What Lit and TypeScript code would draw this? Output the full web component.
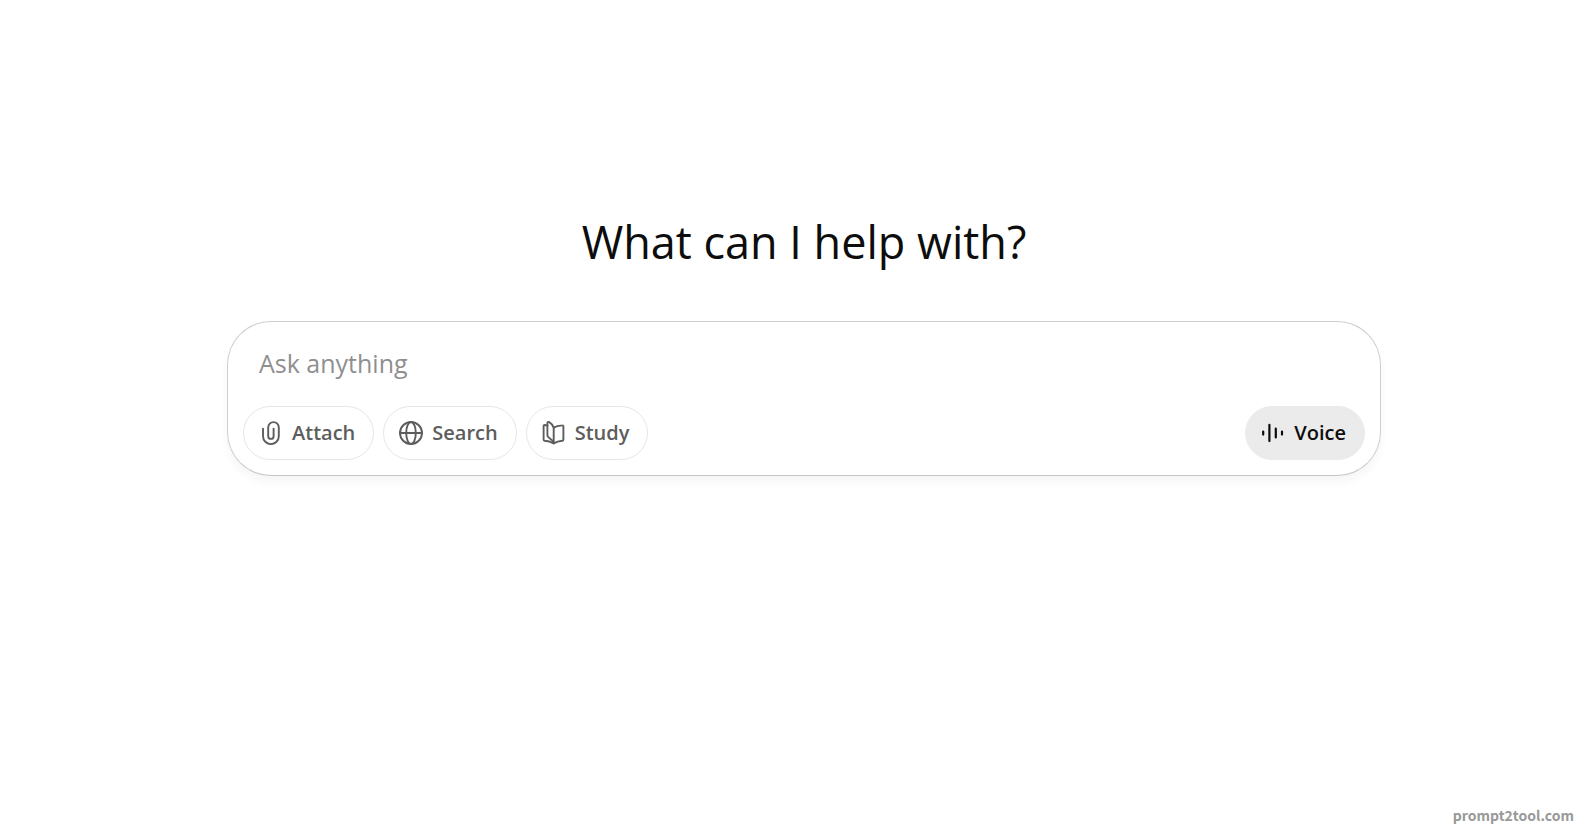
import { LitElement, html, css, svg } from "lit";
import { customElement } from "lit/decorators.js";

const clip = svg`<path d="M4 7.6V15.2a7.9 7.9 0 0 0 15.8 0V6.4a5.3 5.3 0 0 0-10.6 0v8.8a2.7 2.7 0 0 0 5.4 0V7.6"/>`;
const globe = svg`<circle cx="12" cy="12" r="11"/><ellipse cx="12" cy="12" rx="4.8" ry="11"/><path d="M1 12h22"/>`;
const book = svg`<path d="M5.4 4.5 2.6 4Q1.6 4 1.6 5V18.6Q1.6 19.6 2.6 19.7C6.5 19.9 9.2 20.9 11.7 22.4C14.2 20.9 17 20 20.4 19.7Q21.4 19.6 21.4 18.6V5.4Q21.4 4.3 20.3 4.4C17 4.6 14 5.2 11.7 6.6V22.4"/><path d="M11.7 6.6C10.7 4 9.3 2.3 7.2 1.1Q5.4.5 5.4 2.2V14.2Q5.4 15.4 6.5 16.2C9 17.8 10.8 19.5 11.7 22.4"/>`;
const wave = svg`<path d="M2.2 10.6v3M8.4 3.9v16.2M14.8 7.6v8.8M21 10.6v3"/>`;

@customElement("app-root")
export class AppRoot extends LitElement {
  static styles = css`
    :host {
      display: flex;
      flex-direction: column;
      min-height: 100vh;
      box-sizing: border-box;
      background: #fff;
      color: #0d0d0d;
      font-family: "Segoe UI", "Open Sans", "Noto Sans", sans-serif;
    }
    main {
      flex: 1;
      padding: 212px 205px 0 227px;
    }
    h1 {
      margin: 0 0 49px;
      font-size: 45px;
      font-weight: 400;
      line-height: 60px;
      text-align: center;
    }
    form {
      display: flex;
      flex-direction: column;
      gap: 26px;
      padding: 24px 15px 15px;
      border: 1px solid #cfcfcf;
      border-bottom-color: #c4c4c4;
      border-radius: 44px;
      box-shadow: 0 6px 10px rgba(0, 0, 0, 0.04);
    }
    input {
      font: 400 25px/34px "Segoe UI", "Open Sans", "Noto Sans", sans-serif;
      height: 34px;
      padding: 0 16px;
      border: 0;
      outline: 0;
      background: none;
      color: #0d0d0d;
    }
    input::placeholder {
      color: #8f8f8f;
      opacity: 1;
    }
    .tools {
      display: flex;
      gap: 9px;
    }
    button {
      display: flex;
      align-items: center;
      gap: 9px;
      height: 54px;
      padding: 0 18px 0 15px;
      border: 1px solid #e6e6e6;
      border-radius: 27px;
      background: #fff;
      color: #5d5d5d;
      font: 600 20px/30px "Segoe UI", "Open Sans", "Noto Sans", sans-serif;
    }
    .voice {
      margin-left: auto;
      border-color: #ebebeb;
      background: #ebebeb;
      color: #0d0d0d;
    }
    svg {
      width: 24px;
      height: 24px;
      fill: none;
      stroke: currentColor;
      stroke-width: 1.9;
      stroke-linecap: round;
      stroke-linejoin: round;
    }
    .voice svg {
      stroke-width: 2.2;
    }
    footer {
      padding: 0 12px 5px;
      text-align: right;
      color: #999;
      font: 700 14px/22px "Noto Sans CJK SC", sans-serif;
    }
  `;

  private icon(shape: unknown) {
    return html`<svg viewBox="0 0 24 24" aria-hidden="true">${shape}</svg>`;
  }

  render() {
    return html`
      <main>
        <h1>What can I help with?</h1>
        <form @submit=${(e: Event) => e.preventDefault()}>
          <input type="text" aria-label="Ask anything" placeholder="Ask anything" />
          <div class="tools">
            <button type="button">${this.icon(clip)}<span>Attach</span></button>
            <button type="button">${this.icon(globe)}<span>Search</span></button>
            <button type="button">${this.icon(book)}<span>Study</span></button>
            <button type="button" class="voice">${this.icon(wave)}<span>Voice</span></button>
          </div>
        </form>
      </main>
      <footer>prompt2tool.com</footer>
    `;
  }
}
